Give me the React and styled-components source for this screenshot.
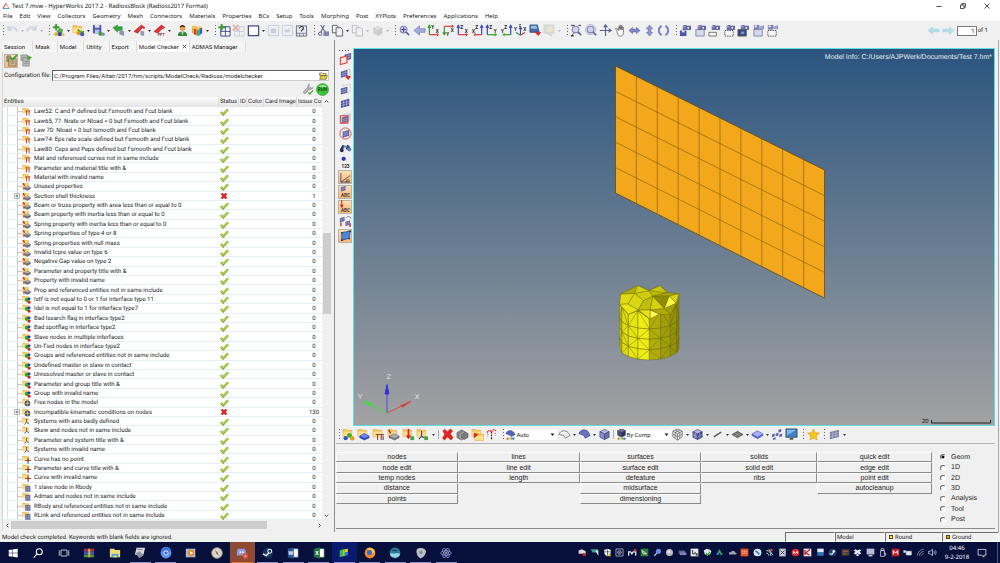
import React from "react";
import styled, { createGlobalStyle, css } from "styled-components";

const UI = 'Roboto, "Liberation Sans", sans-serif';
const SHELL = '"Noto Sans", "Open Sans", sans-serif';
const CLASSIC = '"Liberation Sans", Arial, sans-serif';

const GlobalStyle = createGlobalStyle`
  *, *::before, *::after { box-sizing: border-box; }
  html, body { margin: 0; padding: 0; background: #f0f0f0; }
  body {
    font-family: ${UI};
    font-size: 6px;
    line-height: 9px;
    color: #1c1c1c;
    text-rendering: geometricPrecision;
  }
  button, input, select { font: inherit; color: inherit; margin: 0; padding: 0; border: 0; border-radius: 0; outline: 0; }
  button { background: none; }
`;

/* ---------- icon primitives ---------- */

const Svg = styled.svg`
  display: block;
  flex: none;
  width: ${(p) => p.$size || 13}px;
  height: ${(p) => p.$size || 13}px;
`;

const Folder = ({ x = 0, y = 0 }) => (
  <g transform={`translate(${x} ${y})`}>
    <path d="M1 1.500h4l1 1h4.500v7H1z" fill="#f3c75c" stroke="#d69f3a" strokeWidth=".5" />
    <path d="M1.300 4h9v5.300h-9z" fill="#fbdf8c" />
  </g>
);
const Cube = ({ x = 0, y = 0, s = 1, top = "#a9aee0", left = "#6d73b5", right = "#4a4f90", line = "#2e3266" }) => (
  <g transform={`translate(${x} ${y}) scale(${s})`} stroke={line} strokeWidth=".6" strokeLinejoin="round">
    <path d="M6 .5l5 2.500-5 2.500-5-2.500z" fill={top} />
    <path d="M1 3l5 2.500v6L1 9z" fill={left} />
    <path d="M11 3L6 5.500v6L11 9z" fill={right} />
  </g>
);
const Mesh = ({ x = 0, y = 0, c = "#4d5296" }) => (
  <g transform={`translate(${x} ${y})`}>
    <path d="M0 2l7-2v6.500L0 8.500z" fill={c} />
    <path d="M2.300 1.300v6.500M4.700.7v6.500M0 4.200l7-2M0 6.300l7-2" stroke="#c3c7e8" strokeWidth=".5" />
  </g>
);
const Mag = () => (
  <g>
    <circle cx="6" cy="6" r="3.600" fill="#cfd3ee" stroke="#8387b8" strokeWidth="1.200" />
    <path d="M8.700 8.700L12 12" stroke="#5a5f95" strokeWidth="1.700" />
  </g>
);
const Cam = () => (
  <g>
    <path d="M5 1h3l.5 1H13v4.500H4V2h1z" fill="#6c6fae" />
    <circle cx="10" cy="4.200" r="1.700" fill="#dfe1f5" stroke="#35386e" strokeWidth=".8" />
    <path d="M4 3h3" stroke="#c3c6ea" strokeWidth=".8" />
  </g>
);
const Video = () => (
  <g>
    <path d="M2 1h6v5H2z" fill="#7c80ba" />
    <path d="M8 3l5-2v5L8 5z" fill="#9a9ed0" />
    <circle cx="4" cy="2.500" r="1.500" fill="#c9ccec" />
  </g>
);
const Axes = ({ up, side, hc, vc, flip, down }) => {
  const ox = flip ? 11.5 : 2.5;
  const ex = flip ? 4 : 12;
  const oy = down ? 2.5 : 11.5;
  const ey = down ? 11 : 2;
  const sy = down ? -1 : 1;
  return (
    <g>
      <path d={`M${ox} ${oy}V${ey}M${ox - 1.5} ${ey + 2 * sy}L${ox} ${ey - sy * 0.5}l1.500 ${2.500 * sy}`} stroke={vc} fill="none" strokeWidth="1.300" />
      <path d={`M${ox} ${oy}H${ex}`} stroke={hc} strokeWidth="1.300" />
      <path d={flip ? `M5 ${oy - 1.5}L3 ${oy}l2 1.500` : `M10.500 ${oy - 1.5}l2 1.500-2 1.500`} stroke={hc} fill="none" strokeWidth="1" />
      <text x="4.500" y={down ? 12.5 : 5} fontSize="5" fontWeight="700" fill="#222">{up}</text>
      <text x={flip ? 1 : 9.5} y={down ? 8.5 : 9.5} fontSize="5" fontWeight="700" fill="#222">{side}</text>
    </g>
  );
};
const Rainbow = ({ y = 11 }) => (
  <g>
    <rect x="2" y={y} width="2.500" height="2.500" fill="#e23b3b" />
    <rect x="4.500" y={y} width="2.500" height="2.500" fill="#e9d32b" />
    <rect x="7" y={y} width="2.500" height="2.500" fill="#3bc24a" />
    <rect x="9.500" y={y} width="2.500" height="2.500" fill="#3d50e0" />
  </g>
);
const Pages = () => (
  <g fill="#f2f2f6" stroke="#4a4d5c" strokeWidth=".9">
    <path d="M1.500 1.500h5l1.500 2v6H1.500z" />
    <path d="M5.500 4h5l2 2v7h-7z" />
  </g>
);
const FlatDiamond = ({ c = "#5560d8", t = "#aab2f4" }) => (
  <g>
    <path d="M7 11.500L1 8V6.500l6 1.500 6-1.500V8z" fill={c} stroke="#333a80" strokeWidth=".4" />
    <path d="M7 3l6 3.500L7 10 1 6.500z" fill={t} stroke={c} strokeWidth=".8" />
  </g>
);

const icons = {
  undo: <path d="M2 6c3-4 8-3 10 2M2 6l.5-4M2 6l4 .5" stroke="#b9bfd6" strokeWidth="2" fill="none" opacity=".6" />,
  redo: <path d="M12 6C9 2 4 3 2 8M12 6l-.5-4M12 6l-4 .5" stroke="#b9bfd6" strokeWidth="2" fill="none" opacity=".6" />,
  newModel: (
    <g>
      <path d="M5 8l3-4 4 2-1 4-4 2z" fill="#5aa84c" />
      <path d="M4.500 0v7M1 3.500h7" stroke="#3c9a35" strokeWidth="2" />
      <circle cx="4.500" cy="11" r="2" fill="#e8b21e" />
      <circle cx="8.500" cy="11" r="2.200" fill="#2c46b8" />
      <circle cx="12" cy="11.500" r="1.600" fill="#e8cf3a" />
    </g>
  ),
  openModel: (<g><Folder /><path d="M6 6l4 3 3-1" stroke="#35a02c" strokeWidth="1.600" fill="none" /><circle cx="7" cy="10" r="2.200" fill="#e29a1c" /><circle cx="11" cy="11" r="2.200" fill="#3f55c0" /></g>),
  save: (<g><path d="M1 1h9v9H1z" fill="#4b56ad" /><path d="M3 1h5v3H3z" fill="#dfe3f5" /><path d="M3 6h5v4H3z" fill="#b9c0e8" /><circle cx="9" cy="10.500" r="2.200" fill="#3a9a34" /><circle cx="12" cy="11" r="1.800" fill="#7d88d0" /></g>),
  importG: (<g><path d="M1 4l5-3v2h5v4H6v2z" fill="#35a73a" stroke="#1e7a25" strokeWidth=".5" /><path d="M8 6l5 2v5l-5-2z" fill="#8e93ae" /></g>),
  exportR: (<g><path d="M1 8l8-7 4 3-1 1-2-1-5 6z" fill="#e23232" stroke="#a41c1c" strokeWidth=".5" /><path d="M8 7l4 1v5l-4-1z" fill="#9297b4" /></g>),
  exportP: (<g><path d="M1 8l8-7 4 3-3 1-5 5z" fill="#e23232" stroke="#a41c1c" strokeWidth=".5" /><text x="5" y="13" fontSize="4" fontWeight="700" fill="#8a3030">PPT</text></g>),
  user: (<g><path d="M2 13c0-4 2-5 5-5s5 1 5 5z" fill="#2f8d3a" /><circle cx="7" cy="4.500" r="3" fill="#e0a35c" /><path d="M4 4c0-4 6-4 6 0-2-2-4-1-6 0z" fill="#4d2d14" /><path d="M6 8l1 4 1-4z" fill="#fff" /></g>),
  book: (<g><path d="M1 2h5l1 1h5v4H1z" fill="#f2c45c" /><path d="M3 5l3 1v6l-3-1z" fill="#e23b2a" /><path d="M6 6l3 1v6l-3-1z" fill="#3bb34a" /><path d="M9 5l3-1v6l-3 2z" fill="#3d58d0" /><path d="M1 4l2 1v6l-2-2z" fill="#e9b02b" /></g>),
  pagePlus: (<g><path d="M3 3h10v10H3z" fill="#f4f6fb" stroke="#39408a" strokeWidth="1" /><path d="M8 3v10M3 8h10" stroke="#39408a" strokeWidth=".9" /><path d="M4 0v7M.5 3.500h7" stroke="#36a032" strokeWidth="2" /></g>),
  pageDel: (<g opacity=".35"><path d="M3 3h10v10H3zM8 3v10M3 8h10" fill="none" stroke="#8c8ea0" strokeWidth="1" /><path d="M1 1l6 6M7 1L1 7" stroke="#d63b3b" strokeWidth="2" /></g>),
  win: <path d="M1.500 2h11v10.500h-11z" fill="#fdfdff" stroke="#4a4f80" strokeWidth="1.400" />,
  winA: (<g opacity=".4"><path d="M1.500 1.500h11v11h-11z" fill="#eceef6" stroke="#9298c0" /><path d="M4 5h6v5H4z" fill="#9aa0c4" /></g>),
  winB: (<g opacity=".4"><path d="M1.500 1.500h11v11h-11z" fill="#eceef6" stroke="#9298c0" /><path d="M8 4l2 3-2 3M4 6h4v3H4z" fill="#9aa0c4" /></g>),
  pageEdit: (<g><path d="M1.500 2h11v11h-11z" fill="#e9ebf4" stroke="#555a70" strokeWidth=".9" /><path d="M1.500 10h11M5 10v3M9 10v3" stroke="#555a70" strokeWidth=".7" /><path d="M4.500 5c1-3.500 5-2.500 4.500 0L6.500 8" stroke="#333" strokeWidth="1.200" fill="none" /></g>),
  cut: (<g><path d="M4 1l5 8M8 1L4 9" stroke="#666a80" strokeWidth="1.200" /><circle cx="3.500" cy="10.500" r="1.800" fill="none" stroke="#4a5088" /><path d="M7 8h6v5H7z" fill="#8287b0" /></g>),
  copy: <Pages />,
  paste: <g opacity=".35"><Pages /></g>,
  pasteB: <g opacity=".35"><Cube x={2} y={2} s={0.9} top="#c8c8c8" left="#999" right="#888" line="#777" /></g>,
  zoomFit: (<g><Mag /><path d="M6 3.500v5M3.500 6h5" stroke="#3e437c" strokeWidth="1.100" /></g>),
  back: <path d="M1 7l6-5v3h6v4H7v3z" fill="#a6abdb" stroke="#7479b5" strokeWidth=".7" />,
  ax1: <Axes up="Y" side="X" vc="#27a32d" hc="#d83a3a" />,
  ax2: <Axes up="Y" side="X" vc="#27a32d" hc="#d83a3a" down />,
  ax3: <Axes up="Z" side="X" vc="#3b44d0" hc="#d83a3a" />,
  ax4: <Axes up="Z" side="X" vc="#3b44d0" hc="#d83a3a" flip />,
  ax5: <Axes up="Z" side="Y" vc="#3b44d0" hc="#27a32d" />,
  ax6: <Axes up="Z" side="Y" vc="#3b44d0" hc="#27a32d" flip />,
  iso: (<g><path d="M7 12V4M5.500 5.500L7 3.500l1.500 2" stroke="#3b44d0" fill="none" strokeWidth="1.200" /><path d="M7 12L2 9" stroke="#27a32d" strokeWidth="1.300" /><path d="M7 12l5-3" stroke="#d83a3a" strokeWidth="1.300" /><text x="0" y="7" fontSize="5" fontWeight="700" fill="#222">Y</text><text x="10" y="7" fontSize="5" fontWeight="700" fill="#222">X</text><text x="5" y="3.500" fontSize="4" fontWeight="700" fill="#222">Z</text></g>),
  scene: (<g><path d="M1 1h8l2 8H1z" fill="#3f6ea8" stroke="#27486f" strokeWidth=".8" /><path d="M2 2h6l1 3H2z" fill="#9cc0e4" /><path d="M6 9l3-1 4 1-3 4z" fill="#e02a2a" /></g>),
  sceneB: (<g opacity=".45"><path d="M1 1h11v9H1z" fill="#b9cbb9" stroke="#aaa" strokeWidth=".8" /><circle cx="7" cy="6" r="3" fill="#efd9a0" /><path d="M4 9l6 4" stroke="#bfa0a0" strokeWidth="1.500" /></g>),
  zoomWin: (<g><Mag /><path d="M1 1.500h4M9 1.500h3M1 12.500h3" stroke="#333" strokeWidth="1" /><path d="M4 10L1 13h3" stroke="#333" fill="none" strokeWidth=".8" /></g>),
  zoomCirc: (<g><Mag /><circle cx="6" cy="6" r="5.300" fill="none" stroke="#9a9cc0" strokeWidth=".8" /></g>),
  pan: (<g stroke="#5a5f95" strokeWidth="1.200" fill="#5a5f95"><path d="M7 1v12M1 7h12" /><path d="M5.500 3L7 1l1.500 2zM11 5.500l2 1.500-2 1.500z" /></g>),
  hand: <path d="M3 7l-1.500-2 1-.7L5 7V3h1.200v3V1.500h1.300V6V2h1.300v4.500V3.500h1.300V9c0 3-1 4-3.500 4S4 11 3 7z" fill="#fff" stroke="#444" strokeWidth=".7" />,
  lr: <path d="M1 7l4-3.500v2h4v-2L13 7l-4 3.500v-2H5v2z" fill="#8085c6" stroke="#5a5fa0" strokeWidth=".5" />,
  ud: <path d="M7 1l3.500 4h-2v4h2L7 13 3.500 9h2V5h-2z" fill="#8f94d2" stroke="#5a5fa0" strokeWidth=".5" />,
  rot: (<g fill="none" stroke="#7d82c4" strokeWidth="2.200"><path d="M5 2C1 4 1 10 5 12" /><path d="M9 2c4 2 4 8 0 10" /></g>),
  cam1: (<g><Cam /><path d="M1 7h7v6H1z" fill="#4e54a6" /><path d="M3 7h3v2H3z" fill="#dfe1f5" /></g>),
  cam2: (<g><Cam /><path d="M2 6h9v7H2z" fill="#d4dbef" stroke="#5c6080" strokeWidth=".7" /></g>),
  cam3: (<g><Cam /><path d="M1 9h8v4H1z" fill="#f4f4f8" stroke="#555" strokeWidth=".8" /></g>),
  cam4: (<g><Cam /><path d="M2 7h9v6H2z" fill="#f7f7fb" stroke="#333" strokeWidth=".9" strokeDasharray="1.500 1" /></g>),
  cam5: (<g><Cam /><path d="M1 6h9v7H1z" fill="#2f3c78" stroke="#666" /><path d="M4 8h4v3H4z" fill="#6b9ad8" /></g>),
  vid1: (<g><Video /><path d="M2 6h9v7H2z" fill="#d4dbef" stroke="#5c6080" strokeWidth=".7" /></g>),
  vid2: (<g><Video /><path d="M2 7h9v6H2z" fill="#f7f7fb" stroke="#333" strokeWidth=".9" strokeDasharray="1.500 1" /></g>),
  prev: <path d="M1 7l5-4v2.500h7v3H6V11z" fill="#b5dfe8" stroke="#a0d2dd" strokeWidth=".5" />,
  next: <path d="M13 7L8 3v2.500H1v3h7V11z" fill="#b5dfe8" stroke="#a0d2dd" strokeWidth=".5" />,

  check1: (<g><path d="M2 2h4v6H2z" fill="#a8997c" stroke="#6b6250" strokeWidth=".7" /><path d="M4 5h8v8H4z" fill="#c9b48c" stroke="#6b6250" strokeWidth=".7" /><path d="M6 8h4M6 10h4" stroke="#8a8168" strokeWidth=".8" /><path d="M6 4l2 2 5-5" stroke="#35a02c" strokeWidth="1.800" fill="none" /></g>),
  check2: (<g><path d="M1 1h7v6H1z" fill="#b5b5b5" stroke="#7d7d7d" strokeWidth=".6" /><path d="M3 4h7v9H3z" fill="#b8b8b8" stroke="#6f6f6f" strokeWidth=".6" /><path d="M5 8h4M5 10h4" stroke="#888" strokeWidth=".8" /><path d="M8 1l5 3-5 3z" fill="#4aa53e" /></g>),
  openFile: (<g><path d="M1 3h4l1 1h5v3H1z" fill="#f5e67a" stroke="#333" strokeWidth=".8" /><path d="M1 13l2-6h10l-2 6z" fill="#e8c92c" stroke="#333" strokeWidth=".8" /></g>),
  wrench: (<g><path d="M3 11l6-6" stroke="#777" strokeWidth="3.200" /><path d="M3 11l6-6" stroke="#c4c4c4" strokeWidth="2" /><path d="M9 1a3 3 0 1 0 4 4l-2 .5L8.500 3z" fill="#c4c4c4" stroke="#777" strokeWidth=".6" /><path d="M8 10l1.500 2L13 8" stroke="#35a02c" strokeWidth="1.300" fill="none" /></g>),
  run: (<g><circle cx="7" cy="7" r="6.500" fill="#3fc23a" stroke="#2a8f2a" strokeWidth=".6" /><path d="M2 5c2-4 8-4 10 0z" fill="#8fe88a" /><text x="7" y="9" fontSize="5" fontWeight="700" textAnchor="middle" fill="#0d4d12">RUN</text></g>),

  s1: (<g><Mesh x={6} y={0} /><path d="M1.500 5l7-1.500v7l-7 2z" fill="#fbe9e9" stroke="#e0483c" strokeWidth="1.200" /></g>),
  s2: (<g><Mesh x={2} y={2} /><path d="M9 1l3 1v6" stroke="#bbb" fill="none" /><path d="M7 10l2-2 4 1-3 4z" fill="#e02a2a" /></g>),
  s3: (<g><Mesh x={2} y={4} /><path d="M3 3l9-2v9l-3 1" fill="none" stroke="#b5b5b5" strokeWidth=".8" strokeDasharray="1 .6" /></g>),
  s4: (<g transform="translate(2 2) scale(1.300 1.150)"><Mesh /></g>),
  s5: (<g><path d="M4 2l9-1v8l-9 2z" fill="#d5d5dc" /><Mesh x={3} y={4} /><path d="M1.500 4h8v8h-8z" fill="none" stroke="#e0483c" strokeWidth="1.200" /></g>),
  s6: (<g><Mesh x={4} y={3} /><circle cx="7" cy="7" r="6" fill="none" stroke="#e0483c" strokeWidth="1" /></g>),
  s7: (<g><path d="M1 9l3-5 2 1-2 5zM7 9l2-5 2 1 2 5z" fill="#26386e" /><circle cx="3" cy="10" r="2" fill="#1c2b58" /><circle cx="11" cy="9" r="2.200" fill="#5b80c0" /><path d="M5 5h4v2H5z" fill="#6b7cae" /></g>),
  s8: (<g><circle cx="5" cy="3" r="2.300" fill="#2a33c0" /><text x="7" y="13" fontSize="5" fontWeight="700" textAnchor="middle" fill="#222">123</text></g>),
  s9: (<g><path d="M2 2v10h10M2 12l10-7" stroke="#2b2f78" fill="none" strokeWidth=".8" /><text x="6" y="12" fontSize="4" fill="#222">.40</text></g>),
  s10: (<g><g transform="translate(2 1) scale(.7)"><Mesh /></g><text x="7" y="12.500" fontSize="5" fontWeight="700" textAnchor="middle" fill="#444">ABC</text></g>),
  s11: (<g><path d="M3 0v7M1.500 5L3 8l1.500-3" stroke="#d02020" fill="#d02020" strokeWidth="1" /><text x="7" y="12.500" fontSize="5" fontWeight="700" textAnchor="middle" fill="#444">ABC</text></g>),
  s12: (<g><g transform="translate(1 2) scale(.7)"><Mesh /></g><g transform="translate(7 6) scale(.7)"><Mesh /></g><path d="M2 8v4M12 9v4" stroke="#e02a2a" strokeWidth="1.500" /><path d="M8 3c2-3 4-1 5 1" stroke="#777" fill="none" /></g>),
  s13: (<g><path d="M3 4l9-2-1 8-8 2z" fill="#4c86d8" stroke="#1f4688" strokeWidth=".8" /><circle cx="3" cy="4" r=".9" fill="#222" /><circle cx="12" cy="2.500" r=".9" fill="#222" /><circle cx="3" cy="12" r=".9" fill="#222" /><circle cx="11" cy="10.500" r=".9" fill="#222" /></g>),

  comp: (<g><Folder /><circle cx="8" cy="8" r="2.600" fill="#3bb02f" /><circle cx="4" cy="11" r="2.300" fill="#3554c8" /><circle cx="11" cy="11" r="2.500" fill="#d9a520" /></g>),
  part: (<g><Folder /><path d="M8 6l5 2.500v2L8 13l-5-2.500v-2z" fill="#2c46c8" stroke="#16268a" strokeWidth=".5" /><path d="M8 6l5 2.500L8 11 3 8.500z" fill="#6c84ee" /></g>),
  mat: (<g><Folder /><path d="M4 7h9M6 7v6M10 7v6M12 8v5" stroke="#8e4a4a" strokeWidth="1.200" /></g>),
  prop: (<g><Folder /><path d="M2 2l2 4M3 8v3" stroke="#d02a1c" strokeWidth="1.600" /><path d="M8 6l5 2.500v2L8 13l-5-2.500v-2z" fill="#77777c" stroke="#4a4a4e" strokeWidth=".5" /><path d="M8 6l5 2.500L8 11 3 8.500z" fill="#a9a9ae" /></g>),
  load: (<g><Folder /><path d="M7 1v8" stroke="#e02020" strokeWidth="2" /><path d="M4 8h6l-3 4z" fill="#e02020" /><path d="M9 9h4v4H9z" fill="#4aa53e" /></g>),
  sys: (<g><Folder /><path d="M6 3v6l-3 3M6 9l4 2" stroke="#44506e" strokeWidth="1.300" fill="none" /><path d="M9 9h4v4H9z" fill="#4aa53e" /></g>),
  del: <path d="M2 3l2-1.500L7 4l3-3 2.500 2L10 6.500l3 4L10.500 13 7 9.500 4 13l-2.500-2L4 7z" fill="#e8221c" stroke="#9c1410" strokeWidth=".5" />,
  cards: (<g fill="#8b8b8b" stroke="#444" strokeWidth=".5"><path d="M1 5l5-3 3 2v5l-5 3-3-2z" /><path d="M3 6l5-3 3 2v5l-5 3-3-2z" fill="#a5a5a5" /><path d="M6 7l4-2.500 3 1.500v4l-4 2.500-3-2z" fill="#7a7a7a" /></g>),
  organize: (<g><Folder /><g transform="translate(3 4)"><Folder /></g><path d="M3 5l5 2-5 4z" fill="#e02020" /></g>),
  renumber: (<g><path d="M7 4v9" stroke="#333" strokeWidth="1.300" strokeDasharray="2 1" /><path d="M2.500 5c0-3 4-3 4 0M7.500 4c0-3 4-3 4 0" stroke="#d83030" fill="none" strokeWidth="1.400" strokeDasharray="1.500 .7" /><path d="M3 6v3M11 5v3" stroke="#d86060" strokeWidth="1.200" strokeDasharray="1.500 1" /></g>),
  shade: (<g><path d="M1 6c2-5 7-5 10-2l2 3-5 3-2-2z" fill="#5a62b8" stroke="#333a80" strokeWidth=".6" /><Rainbow /></g>),
  wireSurf: <path d="M1 7c2-5 7-5 10-2l2 3-5 3-2-3z" fill="#eee" stroke="#666" strokeWidth=".8" />,
  solidSurf: <path d="M1 6c2-5 7-5 10-2l2 4-5 3-2-3z" fill="#6a72c0" stroke="#3b4080" strokeWidth=".7" />,
  cube: <Cube x={1} y={1} top="#b7bbe6" left="#8a8fce" right="#6a6fb0" />,
  cubeColor: (<g><Cube x={1} y={-1} top="#70758c" left="#474b74" right="#2f3258" /><Rainbow /></g>),
  cubeWire: (<g fill="none" stroke="#555" strokeWidth=".7"><path d="M7 1l5 2.500v6L7 13 2 9.500v-6z" /><path d="M2 3.500l5 2.500 5-2.500M7 6v7M2 6.500l5 3 5-3M4.500 2.200l5 2.600v6M9.500 2.200l-5 2.600v6" /></g>),
  cubeMesh: (<g><Cube x={1} y={1} /><path d="M2 7l5 3 5-3M4.500 3l5 2.500v5.500M9.500 3L4.500 5.500V11" stroke="#c3c7e8" fill="none" strokeWidth=".5" /></g>),
  line: <path d="M3 9.500l8-5" stroke="#555" strokeWidth="1.500" />,
  flat: (<g><path d="M7 3.500l6 3.500-6 3.500L1 7z" fill="#6d706c" stroke="#3f423e" strokeWidth=".6" /><path d="M4 5.300l6 3.500M10 5.300L4 8.800" stroke="#a9aca8" strokeWidth=".6" /></g>),
  diamond: <FlatDiamond />,
  split: (<g fill="#5d64b4"><path d="M1 7l3-1v3l-3 1zM5 6l3-1v3L5 9zM8 2l3-1v3l-3 1zM2 11l3-1v2l-3 1zM9 7l3-1v3l-3 1z" /></g>),
  monitor: (<g><path d="M1 1h12v9H1z" fill="#3d86c8" stroke="#2b3540" strokeWidth=".8" /><path d="M2 2h10L2 8z" fill="#7fb9ea" /><path d="M5 11h4v1.500H5z" fill="#333" /></g>),
  star: <path d="M7 1l1.900 4 4.400.5-3.300 3 .9 4.400L7 10.700l-3.900 2.200.9-4.400-3.300-3L5.100 5z" fill="#f8c41a" stroke="#d19408" strokeWidth=".6" />,
  meshSurf: (<g transform="translate(2 2) scale(1.400 1.200)"><Mesh c="#7a7f9c" /></g>),
};

const Icon = ({ name, size }) => (
  <Svg $size={size} viewBox="0 0 14 14" aria-hidden="true">{icons[name]}</Svg>
);

/* ---------- tree item icons ---------- */
const treeIcons = {
  mat: (<g><Folder /><path d="M5 6h8M7 6v7M11 6v7" stroke="#c0403a" strokeWidth="1.500" /></g>),
  prop: (<g><Folder /><path d="M2 2l2 4M3 8v4" stroke="#c02a1c" strokeWidth="2" /><path d="M8 5.500l5.500 2.500v3L8 13.500 3.500 11V8z" fill="#6c6c70" /><path d="M8 6l4.500 2L8 10 4 8z" fill="#aeaeb4" /></g>),
  group: (<g><Folder /><circle cx="7.500" cy="7.500" r="3.200" fill="#1fae28" /><circle cx="11" cy="6" r="2.300" fill="#2434c8" /><circle cx="11" cy="11" r="2.500" fill="#d82020" /></g>),
  node: (<g><Folder /><circle cx="8.500" cy="8.500" r="4.500" fill="#4a5078" /><path d="M4 8.500h9M8.500 4v9" stroke="#b9bcd0" strokeWidth=".9" /><circle cx="8.500" cy="8.500" r="1.700" fill="#e8c820" /></g>),
  system: (<g><Folder /><path d="M7 3v5l-3 4M7 8l4 3" stroke="#4a5890" strokeWidth="1.400" fill="none" /></g>),
  curve: (<g><Folder /><path d="M5 8.500h9" stroke="#d02020" strokeWidth="1.500" /><path d="M9.500 4v9.500" stroke="#333" strokeWidth="1.500" /></g>),
  rigid: (<g><Folder /><path d="M5 4.500h8v9H5z" fill="#59608e" /><path d="M5 7.500h8M5 10.500h8M7.500 4.500v9M10.500 4.500v9" stroke="#a5aace" strokeWidth=".8" /></g>),
};

/* ---------- shell: window chrome ---------- */

const Page = styled.div`
  display: flex;
  flex-direction: column;
  min-height: 100vh;
  background: #f0f0f0;
`;
const TitleBar = styled.header`
  display: flex;
  align-items: center;
  height: 12px;
  padding-left: 2px;
  gap: 2px;
  background: #fff;
  font-family: ${SHELL};
  color: #111;
`;
const WindowTitle = styled.h1`
  margin: 0;
  flex: 1;
  font-size: 6px;
  font-weight: 400;
  white-space: nowrap;
`;
const WindowButtons = styled.div`
  display: flex;
  padding-right: 1px;
`;
const WindowButton = styled.button`
  width: 24px;
  height: 11px;
  display: grid;
  place-items: center;
`;
const MenuBar = styled.nav`
  display: flex;
  align-items: center;
  gap: 7px;
  height: 9px;
  padding-left: 3px;
  background: #fff;
  font-family: ${SHELL};
`;
const MenuItem = styled.button`
  line-height: 9px;
  white-space: nowrap;
`;

/* ---------- toolbars ---------- */

const ToolStrip = styled.div`
  display: flex;
  align-items: center;
  gap: ${(p) => p.$gap}px;
  height: ${(p) => p.$height}px;
  padding-left: ${(p) => p.$inset}px;
  flex: none;
`;
const ToolGroup = styled.div`
  display: flex;
  align-items: center;
  justify-content: space-between;
  width: ${(p) => p.$width}px;
`;
const Grip = styled.span`
  flex: none;
  width: ${(p) => (p.$flat ? 12 : 3)}px;
  height: ${(p) => (p.$flat ? 3 : 12)}px;
  background: ${(p) =>
    p.$flat
      ? "repeating-linear-gradient(90deg, #666 0 1px, transparent 1px 3px) center / 100% 1px no-repeat"
      : "repeating-linear-gradient(#666 0 1px, transparent 1px 3px) center / 1px 100% no-repeat"};
`;
const Divider = styled.span`
  width: 3px;
  height: 9px;
  background: ${(p) => (p.$blank ? "none" : "linear-gradient(#b0b0b0, #b0b0b0) center / 1px 100% no-repeat")};
`;
const ToolButton = styled.button`
  flex: none;
  width: 14px;
  height: 14px;
  display: grid;
  place-items: center;
  ${(p) =>
    p.$on &&
    css`
      background: linear-gradient(#fbe3b6, #fbb36a);
      box-shadow: inset 0 0 0 1px #b9b4ac;
    `}
`;
const CaretButton = styled.button`
  flex: none;
  width: 5px;
  height: 12px;
  display: grid;
  place-items: center;
`;
const Caret = ({ faded }) => (
  <CaretButton aria-label="More">
    <svg width="3" height="2" viewBox="0 0 3 2"><path d="M0 0h3L1.500 2z" fill={faded ? "#b5b5b5" : "#333"} /></svg>
  </CaretButton>
);

const PagerBox = styled.div`
  margin-left: auto;
  display: flex;
  align-items: center;
  gap: 1px;
  padding-right: 12px;
`;
const PagerInput = styled.input`
  width: 20px;
  height: 10px;
  padding-right: 1px;
  background: #fff;
  border: 1px solid #7a7a7a;
  text-align: right;
`;

const renderTools = (items) =>
  items.map((it, i) => {
    if (it === "|") return <Divider key={i} />;
    if (it === " ") return <Divider key={i} $blank />;
    if (it === "v") return <Caret key={i} />;
    if (it === "f") return <Caret key={i} faded />;
    if (React.isValidElement(it)) return React.cloneElement(it, { key: i });
    return <ToolButton key={i} aria-label={it}><Icon name={it} /></ToolButton>;
  });

const Tools = ({ width, items }) => (
  <ToolGroup $width={width}>
    <Grip />
    {renderTools(items)}
  </ToolGroup>
);

const ComboBox = styled.label`
  display: flex;
  align-items: center;
  width: ${(p) => p.$width}px;
  height: 11px;
  background: #fff;
`;
const ComboSelect = styled.select`
  appearance: none;
  flex: 1;
  min-width: 0;
  height: 11px;
  background: transparent;
`;
const Combo = ({ width, icon, label, value }) => (
  <ComboBox $width={width}>
    <Icon name={icon} size={11} />
    <ComboSelect aria-label={label} defaultValue={value}><option>{value}</option></ComboSelect>
    <svg width="9" height="9" viewBox="0 0 9 9"><path d="M2.500 3.500h4L4.500 6z" fill="#222" /></svg>
  </ComboBox>
);

/* ---------- main split ---------- */

const Main = styled.main`
  flex: 1;
  display: flex;
  min-height: 0;
`;
const SidePanel = styled.section`
  flex: none;
  width: 335px;
  display: flex;
  flex-direction: column;
  padding: 1px 3px 2px 2px;
  border-right: 1px solid #8d8d8d;
`;
const TabList = styled.div`
  display: flex;
  height: 11px;
`;
const Tab = styled.button`
  display: flex;
  align-items: center;
  gap: 3px;
  padding: 0 ${(p) => (p.$active ? 2 : 7)}px 0 2px;
  border-right: 1px solid #dcdcdc;
  background: ${(p) => (p.$active ? "#fff" : "#f4f4f4")};
  white-space: nowrap;
`;
const PanelBody = styled.div`
  flex: 1;
  display: flex;
  flex-direction: column;
  border-left: 1px solid #d5d5d5;
`;
const PanelTools = styled.div`
  display: flex;
  align-items: center;
  gap: 1px;
  height: 17px;
  padding-left: 1px;
`;
const PathRow = styled.div`
  display: flex;
  align-items: center;
  height: 12px;
  padding: 0 2px 0 1px;
`;
const PathLabel = styled.label`
  width: 48px;
  white-space: nowrap;
`;
const PathField = styled.div`
  flex: 1;
  display: flex;
  align-items: center;
  height: 11px;
  background: #fff;
  border: 1px solid #8a8a8a;
  border-color: #5f5f5f #ccc #ccc #5f5f5f;
`;
const PathInput = styled.input`
  flex: 1;
  height: 9px;
  padding-left: 1px;
  background: transparent;
`;
const ActionRow = styled.div`
  display: flex;
  justify-content: flex-end;
  align-items: center;
  gap: 1px;
  height: 16px;
  padding-right: 2px;
`;
const Browser = styled.div`
  flex: 1;
  display: flex;
  background: #fff;
`;
const Tree = styled.table`
  flex: 1;
  display: flex;
  flex-direction: column;
  border-spacing: 0;
`;
const TreeHead = styled.thead`
  display: block;
  background: linear-gradient(#fdfdfd, #e4e4e4);
`;
const TreeBody = styled.tbody`
  flex: 1;
  display: flex;
  flex-direction: column;
  background: linear-gradient(#dcdcdc, #dcdcdc) 4px 0 / 1px 100% no-repeat,
    linear-gradient(#c9c9c9, #c9c9c9) 14px 0 / 1px 100% no-repeat;
`;
const TreeRow = styled.tr`
  flex: 1;
  display: grid;
  grid-template-columns: 1fr 20px 8px 17px 33px 25px;
  align-items: center;
  box-shadow: ${(p) => (p.$head ? "none" : "inset 0 -1px #e6f1f6")};
`;
const HeadCell = styled.th`
  padding: 0 0 0 1px;
  font-weight: 400;
  line-height: 10px;
  text-align: left;
  white-space: nowrap;
  box-shadow: inset -1px 0 #d8d8d8;
`;
const NameCell = styled.td`
  display: flex;
  align-items: center;
  padding: 0 0 0 11px;
  line-height: 9px;
  white-space: nowrap;
`;
const Stub = styled.span`
  width: 8px;
  height: 1px;
  background: linear-gradient(90deg, transparent 0 3px, #c9c9c9 3px);
`;
const Expander = styled.button`
  width: 8px;
  height: 6px;
  display: grid;
  place-items: center start;
`;
const ItemName = styled.span`
  padding-left: 3px;
`;
const StatusCell = styled.td`
  padding: 0 0 0 1px;
`;
const CountCell = styled.td`
  grid-column: 6;
  padding: 0 0 0 9px;
  line-height: 9px;
  text-align: center;
`;
const VScroll = styled.div`
  flex: none;
  width: 9px;
  display: flex;
  flex-direction: column;
  align-items: center;
  background: #f0f0f0;
`;
const HScroll = styled.div`
  flex: none;
  height: 10px;
  display: flex;
  align-items: center;
  padding-right: 8px;
  background: #f0f0f0;
`;
const ScrollButton = styled.button`
  width: 8px;
  height: 9px;
  display: grid;
  place-items: center;
`;
const Space = styled.span`
  flex: ${(p) => p.$grow};
`;
const Thumb = styled.span`
  flex: ${(p) => p.$grow};
  background: #cdcdcd;
  ${(p) => (p.$row ? "height: 8px;" : "width: 8px;")}
`;
const Arrow = ({ turn = 0 }) => (
  <svg width="5" height="5" viewBox="0 0 5 5">
    <path d="M.8 3.300L2.500 1.500l1.700 1.800" fill="none" stroke="#444" strokeWidth=".9" transform={`rotate(${turn} 2.500 2.500)`} />
  </svg>
);

const rows = [
  ["mat", "Law52: C and P defined but Fsmooth and Fcut blank"],
  ["mat", "Law65, 77: Nrate or Nload > 0 but Fsmooth and Fcut blank"],
  ["mat", "Law 70: Nload > 0 but Ismooth and Fcut blank"],
  ["mat", "Law74: Eps rate scale defined but Fsmooth and Fcut blank"],
  ["mat", "Law80: Ceps and Peps defined but Fsmooth and Fcut blank"],
  ["mat", "Mat and referenced curves not in same include"],
  ["mat", "Parameter and material title with &"],
  ["mat", "Material with invalid name"],
  ["prop", "Unused properties"],
  ["prop", "Section shell thickness", 1],
  ["prop", "Beam or truss property with area less than or equal to 0"],
  ["prop", "Beam property with inertia less than or equal to 0"],
  ["prop", "Spring property with inertia less than or equal to 0"],
  ["prop", "Spring properties of type 4 or 8"],
  ["prop", "Spring properties with null mass"],
  ["prop", "Invalid Icpre value on type 6"],
  ["prop", "Negative Gap value on type 2"],
  ["prop", "Parameter and property title with &"],
  ["prop", "Property with invalid name"],
  ["prop", "Prop and referenced entities not in same include"],
  ["group", "Istf is not equal to 0 or 1 for interface type 11"],
  ["group", "Idel is not equal to 1 for interface type7"],
  ["group", "Bad Isearch flag in interface type2"],
  ["group", "Bad spotflag in interface type2"],
  ["group", "Slave nodes in multiple interfaces"],
  ["group", "Un-Tied nodes in interface type2"],
  ["group", "Groups and referenced entities not in same include"],
  ["group", "Undefined master or slave in contact"],
  ["group", "Unresolved master or slave in contact"],
  ["group", "Parameter and group title with &"],
  ["group", "Group with invalid name"],
  ["node", "Free nodes in the model"],
  ["node", "Incompatible kinematic conditions on nodes", 130],
  ["system", "Systems with axis badly defined"],
  ["system", "Skew and nodes not in same include"],
  ["system", "Parameter and system title with &"],
  ["system", "Systems with invalid name"],
  ["curve", "Curve has no point"],
  ["curve", "Parameter and curve title with &"],
  ["curve", "Curve with invalid name"],
  ["rigid", "1 slave node in Rbody"],
  ["rigid", "Admas and nodes not in same include"],
  ["rigid", "RBody and referenced entities not in same include"],
  ["rigid", "RLink and referenced entities not in same include"],
];

const Passed = () => (
  <Svg $size={9} viewBox="0 0 8 8" role="img" aria-label="Passed">
    <path d="M.8 4.500l2 2L7.200 2" fill="none" stroke="#6f9a1e" strokeWidth="2" />
    <path d="M1 4.500l1.900 1.600L7 2" fill="none" stroke="#b4dc52" strokeWidth="1.200" />
  </Svg>
);
const Failed = () => (
  <Svg $size={8} viewBox="0 0 8 8" role="img" aria-label="Failed">
    <path d="M1.500 1.500l5 5M6.500 1.500l-5 5" stroke="#e0201c" strokeWidth="2.400" />
  </Svg>
);

const EntityTree = () => (
  <Tree>
    <TreeHead>
      <TreeRow $head>
        {["Entities", "Status", "ID", "Color", "Card Image", "Issue Co"].map((h) => <HeadCell key={h}>{h}</HeadCell>)}
      </TreeRow>
    </TreeHead>
    <TreeBody>
      {rows.map(([kind, name, count]) => (
        <TreeRow key={name}>
          <NameCell>
            {count ? (
              <Expander aria-label={`Expand ${name}`}>
                <svg width="6" height="6" viewBox="0 0 6 6"><path d="M.5.5h5v5h-5z" fill="#fff" stroke="#9aa3b5" strokeWidth=".8" /><path d="M1.500 3h3M3 1.500v3" stroke="#445" strokeWidth=".7" /></svg>
              </Expander>
            ) : (
              <Stub />
            )}
            <Svg $size={9} viewBox="0 0 14 14" aria-hidden="true">{treeIcons[kind]}</Svg>
            <ItemName>{name}</ItemName>
          </NameCell>
          <StatusCell>{count ? <Failed /> : <Passed />}</StatusCell>
          <CountCell>{count || 0}</CountCell>
        </TreeRow>
      ))}
    </TreeBody>
  </Tree>
);

/* ---------- graphics area ---------- */

const WorkArea = styled.section`
  flex: 1;
  min-width: 0;
  display: flex;
  flex-direction: column;
  padding: 0 3px 3px 1px;
  margin-right: 1px;
  border-right: 1px solid #a8a8a8;
`;
const ViewRow = styled.div`
  flex: 1;
  display: flex;
  padding-top: 8px;
`;
const SideTools = styled.div`
  flex: none;
  display: flex;
  flex-direction: column;
  align-items: center;
  justify-content: space-between;
  width: 17px;
  height: 195px;
  padding: 1px 1px 0 2px;
`;
const Viewport = styled.div`
  position: relative;
  flex: 1;
  min-width: 0;
  display: flex;
  border: 1px solid #5ce0e2;
  background: linear-gradient(#2b557f, #a2a2a2);
`;
const ModelInfo = styled.p`
  position: absolute;
  top: 4px;
  right: 2px;
  margin: 0;
  font-family: ${CLASSIC};
  font-size: 7px;
  color: #e8edf2;
`;
const SceneSvg = styled.svg`
  flex: 1;
  width: 100%;
  font-family: ${CLASSIC};
`;

const Plate = () => {
  const x0 = 261.5, x1 = 470.5, yl = 17, yr = 121, hl = 127, hr = 128;
  const cols = Array.from({ length: 9 }, (_, i) => (i + 1) / 10);
  const lines = Array.from({ length: 4 }, (_, i) => (i + 1) / 5);
  return (
    <g stroke="#8a6214" strokeWidth=".7">
      <path d={`M${x0} ${yl}L${x1} ${yr}V${yr + hr}L${x0} ${yl + hl}z`} fill="#f3a81c" stroke="#5b430f" />
      {cols.map((t) => {
        const x = x0 + (x1 - x0) * t, y = yl + (yr - yl) * t;
        return <path key={t} d={`M${x} ${y}V${y + hl}`} />;
      })}
      {lines.map((t) => <path key={t} d={`M${x0} ${yl + hl * t}L${x1} ${yr + hr * t}`} />)}
    </g>
  );
};

const Cylinder = () => {
  const crown = [103, 112, 133, 122, 147, 124, 134, 100, 72];
  const shades = ["#cfcc0e", "#dedb10", "#e8e512", "#f0ed16", "#b0ad0b", "#a09d0a", "#949108", "#868408"];
  const pt = (i, k) => {
    const a = ((i - 4) * Math.PI) / 8;
    const x = 148 + 89 * Math.sin(a);
    if (k === 0) return [x, crown[i]];
    const low = 235 + 35 * Math.cos(a);
    return [x, low - (4 - k) * 31];
  };
  const cells = [];
  for (let i = 0; i < 8; i += 1) {
    for (let k = 0; k < 4; k += 1) {
      const a = pt(i, k), b = pt(i + 1, k), c = pt(i + 1, k + 1), d = pt(i, k + 1);
      const diag = (i + k) % 2 ? [a, c] : [b, d];
      cells.push(
        <g key={`${i}-${k}`}>
          <path d={`M${a}L${b}L${c}L${d}z`} fill={shades[i]} />
          <path d={`M${diag[0]}L${diag[1]}`} />
        </g>
      );
    }
  }
  return (
    <g transform="translate(246 221) scale(.3333)" stroke="#6b690a" strokeWidth="1.300" strokeLinejoin="round">
      {cells}
      <path d="M62 72l51-25 34 15 33-15 22 21 35 3-8 29-17 34-33-12-30 25-33-26-32 12-26-30z" fill="#c4c10c" />
      <path d="M62 72l42-2-20 32-25 1z" fill="#dedb12" />
      <path d="M59 103l25-1 31 18-30 13z" fill="#e8e514" />
      <path d="M62 72l51-25-9 23z" fill="#b0ad0a" />
      <path d="M104 70l43-8 11 17-28 13z" fill="#cfcc0e" />
      <path d="M113 47l34 15-43 8z" fill="#d6d310" />
      <path d="M147 62l33-15 22 21-44 11z" fill="#b9b60c" />
      <path d="M180 47l22 21-55-6z" fill="#c9c60e" />
      <path d="M202 68l35 3-29 7-50 1z" fill="#a8a50a" />
      <path d="M158 79l50-1-15 38z" fill="#8f8c08" />
      <path d="M208 78l-15 38 36-16z" fill="#f8f545" />
      <path d="M208 78l29-7-8 29z" fill="#d6d318" />
      <path d="M193 116l36-16-17 34z" fill="#a09d0a" />
      <path d="M158 79l35 37-43 4z" fill="#d4d110" />
      <path d="M84 102l20-32 26 22-15 28z" fill="#dad712" />
      <path d="M130 92l28-13-8 41-35 0z" fill="#c0bd0c" />
      <path d="M150 120l29 12-29 14z" fill="#ffff55" />
      <path d="M115 120l35 0v27z" fill="#e4e114" />
      <path d="M150 120l43-4 19 18-33-2z" fill="#b0ad0b" />
    </g>
  );
};

const Triad = () => (
  <g strokeWidth="1" fill="none">
    <path d="M33 364V335" stroke="#4b4bd8" />
    <path d="M31 345l2-9 2 9z" fill="#3434d8" stroke="#3434d8" />
    <path d="M33 364L10 353" stroke="#3fdc3f" />
    <path d="M9 352l10 3-2 2z" fill="#3fdc3f" stroke="#3fdc3f" />
    <path d="M33 364l23-11" stroke="#e04848" />
    <path d="M57 352l-8 6-3-1z" fill="#a05050" stroke="#e04848" />
    <g fill="#e4e6ea" fontSize="7" textAnchor="middle">
      <text x="35" y="330">Z</text>
      <text x="6" y="350">Y</text>
      <text x="63" y="350">X</text>
    </g>
  </g>
);

const Scene = () => (
  <SceneSvg viewBox="0 0 640 376" preserveAspectRatio="xMidYMid meet" role="img" aria-label="Model view">
    <Plate />
    <Cylinder />
    <Triad />
    <g stroke="#222" fill="none" strokeWidth="1"><path d="M577.500 371v3h59v-3" /></g>
    <text x="568" y="374" fontSize="6" fill="#222">20</text>
  </SceneSvg>
);

/* ---------- command panel ---------- */

const CommandPanel = styled.div`
  display: flex;
  height: 86px;
  padding-top: 8px;
  border-top: 1px solid #b5b5b5;
  border-bottom: 1px solid #8a8a8a;
  font-family: ${CLASSIC};
  font-size: 7px;
`;
const CommandGrid = styled.div`
  flex: 1;
  display: grid;
  grid-template-columns: 122fr 122fr 122fr 116fr 115fr;
  align-items: start;
`;
const CommandColumn = styled.div`
  display: grid;
  grid-template-rows: repeat(5, 1fr);
  height: 52px;
`;
const Command = styled.button`
  grid-row: ${(p) => p.$row};
  line-height: 8px;
  background: #f0f0f0;
  border: 1px solid;
  border-color: #fff #8a8a8a #8a8a8a #fff;
`;
const PageRadios = styled.fieldset`
  flex: none;
  width: 63px;
  height: 73px;
  margin: 0;
  padding: 0 0 0 8px;
  border: 0;
  display: flex;
  flex-direction: column;
`;
const RadioLabel = styled.label`
  flex: 1;
  display: flex;
  align-items: center;
  gap: 5px;
`;
const Radio = styled.input`
  appearance: none;
  width: 6px;
  height: 6px;
  border-radius: 50%;
  border: 1px solid;
  border-color: #6a6a6a #fff #fff #6a6a6a;
  background: #fff;
  &:checked { background: radial-gradient(#111 0 1px, #fff 2px); }
`;
const columns = [
  ["nodes", "node edit", "temp nodes", "distance", "points"],
  ["lines", "line edit", "length"],
  ["surfaces", "surface edit", "defeature", "midsurface", "dimensioning"],
  ["solids", "solid edit", "ribs"],
  ["quick edit", "edge edit", "point edit", "autocleanup"],
];
const pages = ["Geom", "1D", "2D", "3D", "Analysis", "Tool", "Post"];

/* ---------- status bar ---------- */

const StatusBar = styled.footer`
  display: flex;
  align-items: center;
  height: 10px;
  padding: 0 1px 0 2px;
`;
const StatusText = styled.span`
  flex: 1;
`;
const StatusField = styled.span`
  display: flex;
  align-items: center;
  gap: 2px;
  width: ${(p) => p.$width}px;
  height: 10px;
  padding-left: ${(p) => (p.$swatch ? 3 : 1)}px;
  border: 1px solid;
  border-color: #6f6f6f #fff #fff #6f6f6f;
`;
const Swatch = styled.i`
  width: 4px;
  height: 4px;
  border: 1px solid #55480c;
  background: ${(p) => p.$color};
`;

/* ---------- taskbar ---------- */

const Taskbar = styled.nav`
  display: flex;
  align-items: stretch;
  height: 21px;
  background: #07103a;
  color: #fff;
  font-family: ${SHELL};
`;
const TaskList = styled.div`
  display: flex;
  width: 459px;
`;
const TaskButton = styled.button`
  flex: 1;
  display: grid;
  place-items: center;
  background: ${(p) => p.$tint || "transparent"};
  ${(p) => p.$running && css`
    background: linear-gradient(${p.$line || "#8d93c8"}, ${p.$line || "#8d93c8"}) bottom / 21px 1px no-repeat ${p.$tint || "transparent"};
  `}
`;
const Tray = styled.div`
  margin-left: auto;
  display: flex;
  width: 363px;
`;
const TrayButton = styled.button`
  flex: 1;
  display: grid;
  place-items: center;
`;
const Clock = styled.time`
  width: 36px;
  display: flex;
  flex-direction: column;
  justify-content: center;
  text-align: center;
`;
const NoticeButton = styled.button`
  width: 14px;
  display: grid;
  place-items: center;
`;
const ShowDesktop = styled.button`
  width: 3px;
  margin-left: 8px;
  border-left: 1px solid #4b5378;
`;

const taskIcons = [
  ["Start", <path d="M2 3.500l4.500-.7v4H2zM7 2.700l5.500-.8v4.900H7zM2 7.400h4.500v4L2 10.700zM7 7.400h5.500v4.900L7 11.500z" fill="#fff" />],
  ["Search", <g fill="none" stroke="#fff" strokeWidth="1.200"><circle cx="8.500" cy="5.500" r="3.500" /><path d="M6 8l-4 4.500" /></g>],
  ["Task view", <g fill="none" stroke="#d5d8e6" strokeWidth="1"><path d="M3.500 3.500h7v7h-7zM1.500 4v6M12.500 4v6" /></g>],
  ["Archiver", <g><path d="M1 2h12v3H1z" fill="#b5283a" /><path d="M1 5h12v4H1z" fill="#3a56b8" /><path d="M1 9h12v3H1z" fill="#3a9a3c" /><path d="M6 2h2.500v10H6z" fill="#d9a53a" /></g>],
  ["Files", <g><path d="M1 2h5l1 1.500h6V12H1z" fill="#f8d775" /><path d="M3 8h8v4H3z" fill="#4aa6e0" /><path d="M5 10h4v2H5z" fill="#f8d775" /></g>],
  ["Notes", <g><path d="M3 1h10l-2 8H1z" fill="#d9dbe0" /><path d="M2 7l5-2 4 5-5 3z" fill="#8f96a5" /><path d="M4 3h6" stroke="#777" /></g>, 1],
  ["Chromium", <g><circle cx="7" cy="7" r="6.300" fill="#5a94ee" /><path d="M7 7L1 4a6.300 6.300 0 0 1 12 0z" fill="#3f74d8" /><circle cx="7" cy="7" r="2.800" fill="#fff" /><circle cx="7" cy="7" r="2.100" fill="#3a6fd0" /></g>, 1],
  ["Media player", <g><path d="M1 2h11v10H1z" fill="#9cc6e4" /><circle cx="7" cy="7" r="4" fill="#f08a2a" /><path d="M6 5l3.500 2L6 9z" fill="#fff" /></g>],
  ["Compass", <g><circle cx="7" cy="7" r="6.300" fill="#d9d4c8" stroke="#8a8478" /><path d="M4 3l4 4-1 1z" fill="#a8322a" /><path d="M10 11L6 7l1-1z" fill="#5c5c5c" /></g>],
  ["Chat", <g><path d="M2 2h8c2 3 2 5 2 8H1c0-3 0-5 1-8z" fill="#8c9adf" /><circle cx="5" cy="6" r="1" fill="#fff" /><circle cx="8" cy="6" r="1" fill="#fff" /><circle cx="11" cy="10.500" r="3.300" fill="#e8493c" /><circle cx="11" cy="10.500" r="1" fill="#fff" /></g>, 1, "#8f4a34", "#e07a30"],
  ["Steam", <g><circle cx="7" cy="7" r="6" fill="#14345e" /><circle cx="9" cy="5" r="2.300" fill="none" stroke="#e6ecf4" strokeWidth="1.200" /><path d="M1 8l4 2 3-3" stroke="#e6ecf4" strokeWidth="1.600" fill="none" /></g>, 1],
  ["Word", <g><path d="M6 2h7v10H6z" fill="#fff" stroke="#2b579a" strokeWidth=".7" /><path d="M1 2l7-1.500v13L1 12z" fill="#2b579a" /><text x="4.500" y="9.500" fontSize="6" fontWeight="700" textAnchor="middle" fill="#fff">W</text></g>, 1],
  ["Excel", <g><path d="M6 2h7v10H6z" fill="#fff" stroke="#1e7145" strokeWidth=".7" /><path d="M1 2l7-1.500v13L1 12z" fill="#1e7145" /><text x="4.500" y="9.500" fontSize="6" fontWeight="700" textAnchor="middle" fill="#fff">X</text></g>, 1],
  ["HyperWorks", <g><path d="M2 4l3-1v8l-3 1z" fill="#35b85a" /><path d="M5 3l3-.5v8L5 11z" fill="#7ed63a" /><path d="M8 2.500L11.500 2v4L8 6.500z" fill="#e8c82a" /><path d="M8 6.500l3.500-.5v3.500l-3.500 1z" fill="#3a7ae8" /></g>, 1, "#0a1a6e"],
  ["Firefox", <g><circle cx="7" cy="7" r="6.300" fill="#f2872a" /><path d="M3 2c3-2 7-1 9 2 1 2-1 4-3 4 1-3-3-5-6-6z" fill="#f8c83a" /><circle cx="6.500" cy="6.500" r="3" fill="#3a6ad0" /></g>, 1],
  ["Forum", <g><circle cx="7" cy="7" r="6.300" fill="#2a7a9a" /><path d="M1 8c3-2 5 1 8-1l4 1c-1 6-11 6-12 0z" fill="#9ad4e0" /><path d="M4 4h5" stroke="#0e3c50" strokeWidth="1.500" /></g>, 1],
  ["Disk", <g><path d="M2 3c4-3 9-2 11 2-1 5-4 8-7 8C3 12 1 7 2 3z" fill="#bcbec4" /><circle cx="7" cy="6.500" r="2" fill="#8b8e96" /></g>, 1],
  ["Atom", <g fill="none" stroke="#8a90d0" strokeWidth="1"><ellipse cx="7" cy="7" rx="6" ry="2.500" /><ellipse cx="7" cy="7" rx="6" ry="2.500" transform="rotate(60 7 7)" /><ellipse cx="7" cy="7" rx="6" ry="2.500" transform="rotate(120 7 7)" /><circle cx="7" cy="7" r="1.200" fill="#e05050" /></g>, 1],
];

const trayIcons = [
  <g><path d="M1 4l5-2 6 3v4H1z" fill="#d8dade" /><path d="M8 8l4 4M12 8l-4 4" stroke="#e03030" strokeWidth="2" /></g>,
  <g><path d="M1 2h12l-3 5H4z" fill="#3aa090" /><path d="M8 4h5v8z" fill="#dfe8e8" /></g>,
  <g><path d="M7 1l5 2v4c0 3-3 5-5 6-2-1-5-3-5-6V3z" fill="#fff" /><path d="M7 2v10M2 6h10" stroke="#223" /><path d="M10 8l3 5H7z" fill="#f2b51e" /></g>,
  <g fill="none" stroke="#dfe2ea"><path d="M1.500 1.500h11v11h-11z" /><circle cx="7" cy="7" r="2.800" /><circle cx="7" cy="7" r=".8" /></g>,
  <g><path d="M1 12V6h3l2 3 2-3h4v6" fill="none" stroke="#e8e8ee" strokeWidth="2" /><circle cx="11" cy="3.500" r="2" fill="#e03a30" /></g>,
  <g><path d="M1 1h12v12H1z" fill="#2d7a3a" /><path d="M3 3l2 6h6M5 5l4 3" stroke="#fff" strokeWidth="1.300" fill="none" /></g>,
  <g><circle cx="8.500" cy="5" r="4" fill="#6a8ae0" /><path d="M2 12l4-4" stroke="#b8c8f0" strokeWidth="2" /></g>,
  <g><circle cx="7" cy="7" r="5.500" fill="#b8bcc0" /><circle cx="6" cy="6" r="2" fill="#eee" /></g>,
  <g><path d="M1 4h10v5H1z" fill="#5a6a8e" /><path d="M3 7h10v4H3z" fill="#8a7ab8" /></g>,
  <g><path d="M1 1h12v12H1z" fill="#e8eaee" /><path d="M4 3v6h4V6" stroke="#333" fill="none" strokeWidth="1.500" /><path d="M9 8h3v4H9z" fill="#555" /></g>,
  <g><path d="M1 4c4-4 9-3 12 1l-2 5H3z" fill="#dfe6e2" /><path d="M5 8l2 3 4-5" stroke="#3ab03a" fill="none" strokeWidth="2.200" /></g>,
  <g><path d="M7 2L2 11h3l3-6z" fill="#2aa0d8" /><path d="M7 2l5 9H9L6 6z" fill="#35b03a" /></g>,
  <path d="M2 10c-2-3 2-4 3-4 2-3 6-1 6 1 3 0 3 3 1 3z" fill="#9a9fae" />,
  <g><path d="M1 1h12v12H1z" fill="#e8502a" /><path d="M3 5h8M3 8h8" stroke="#fbd0a8" strokeWidth="1.500" strokeDasharray="2 1" /></g>,
  <g><circle cx="7" cy="7" r="6" fill="#d8ecf8" /><path d="M4 4l6 6" stroke="#2a80c8" strokeWidth="2.500" /></g>,
  <g><path d="M2 4c5 0 7 3 7 8M2 8c2 0 4 1 4 4M6 2l6 9" stroke="#e0e2ea" fill="none" strokeWidth="1.400" /><circle cx="10" cy="3" r="2" fill="#e04a30" /></g>,
  <g><path d="M2 1h10v12H2z" fill="#c8cace" /><path d="M4 4l6 6M10 4l-6 6" stroke="#445" strokeWidth="1.500" /></g>,
  <g><circle cx="7" cy="7" r="6" fill="#e02828" /><path d="M4 9V5.500L7 8l3-2.500V9" stroke="#fff" fill="none" strokeWidth="1.400" /></g>,
  <g><path d="M1 1h12v12H1z" fill="#e4e4e8" /><path d="M3 3v8M3 7l7 4M5 7l6-5" stroke="#c82838" strokeWidth="2.200" /></g>,
  <g><path d="M2 1h10v6H2z" fill="#dfe8f0" /><path d="M2 7h10v5H2z" fill="#2a78c0" /></g>,
  <g><circle cx="7" cy="7" r="6" fill="#22406a" /><circle cx="9" cy="5" r="2" fill="#dfe8f4" /><path d="M2 9l4 1 3-4" stroke="#dfe8f4" strokeWidth="1.800" fill="none" /></g>,
  <g><path d="M1 2h12v10H1z" fill="#47413e" /><path d="M3 5h8M3 9h5" stroke="#c05a3a" strokeWidth="1.500" /></g>,
  <path d="M4 2l3 2 3-2 3 2-3 2 3 2-3 2-3-2-3 2-3-2 3-2-3-2zM4 11l3-1.500 3 1.500-3 2z" fill="#e6eef8" />,
  <g><path d="M1 1h12v9H1z" fill="#b9bdd0" /><path d="M4 11h6v2H4z" fill="#dfe0e8" /></g>,
  <path d="M4 4h6v9H4zM5 1h4v3H5zM9 8h3v4" fill="none" stroke="#e4e6ee" strokeWidth="1.100" />,
  <g><path d="M1 1h12v12H1z" fill="#c01c24" /><path d="M3.500 10V4L7 8l3.500-4v6" stroke="#fff" fill="none" strokeWidth="1.500" /></g>,
  <path d="M1 4h3v3H1zM5 5h8v6H5z" fill="#dfe2ea" stroke="#fff" strokeWidth=".6" />,
  <g fill="none" stroke="#9aa0b8" strokeWidth="1.200"><path d="M2 12C3 6 7 2 12 2M5 12c1-4 3-6 7-7M8 12c1-2 2-3 4-4" /></g>,
  <g fill="none" stroke="#e4e6ee" strokeWidth="1.100"><path d="M1 5h2.500L7 2v10L3.500 9H1z" /><path d="M9 5c1 1 1 3 0 4M11 3.500c2 2 2 5 0 7" /></g>,
];

const menus = ["File", "Edit", "View", "Collectors", "Geometry", "Mesh", "Connectors", "Materials", "Properties", "BCs", "Setup", "Tools", "Morphing", "Post", "XYPlots", "Preferences", "Applications", "Help"];

export default function App() {
  return (
    <Page>
      <GlobalStyle />
      <TitleBar>
        <Svg $size={8} viewBox="0 0 14 14" aria-hidden="true">
          <path d="M7 2L2 11" stroke="#e04838" strokeWidth="1.800" />
          <path d="M7 2l5 9" stroke="#e88a78" strokeWidth="1.500" />
          <path d="M1 11.500h12" stroke="#58a0d8" strokeWidth="1.800" />
        </Svg>
        <WindowTitle>Test 7.mvw - HyperWorks 2017.2 - RadiossBlock (Radioss2017 Format)</WindowTitle>
        <WindowButtons>
          <WindowButton aria-label="Minimize"><svg width="6" height="6" viewBox="0 0 6 6"><path d="M.5 3.500h5" stroke="#222" strokeWidth=".8" /></svg></WindowButton>
          <WindowButton aria-label="Restore"><svg width="6" height="6" viewBox="0 0 6 6"><path d="M.5 2h3.500v3.500H.5zM1.800 2V.6h3.600v3.600H4" fill="none" stroke="#222" strokeWidth=".8" /></svg></WindowButton>
          <WindowButton aria-label="Close"><svg width="6" height="6" viewBox="0 0 6 6"><path d="M.5.5l5 5M5.500.5l-5 5" stroke="#222" strokeWidth=".8" /></svg></WindowButton>
        </WindowButtons>
      </TitleBar>
      <MenuBar>{menus.map((m) => <MenuItem key={m}>{m}</MenuItem>)}</MenuBar>

      <ToolStrip $gap={4} $height={19} $inset={2}>
        <Tools width={42} items={["undo", "f", "redo", "f"]} />
        <Tools width={162} items={["newModel", "v", "openModel", "v", "save", "v", "importG", "v", "exportR", "v", "exportP", "v", " ", "user", "book", "v"]} />
        <Tools width={95} items={["pagePlus", "pageDel", "win", "v", "winA", "winB", "pageEdit"]} />
        <Tools width={77} items={["cut", "copy", "v", "paste", "f", "pasteB", "f"]} />
        <Tools width={168} items={["zoomFit", "back", "ax1", "ax2", "ax3", "ax4", "ax5", "ax6", "iso", "scene", "sceneB", "f"]} />
        <Tools width={105} items={["zoomWin", "zoomCirc", "pan", "hand", "lr", "ud", "rot"]} />
        <Tools width={105} items={["cam1", "cam2", "cam3", "cam4", "cam5", "vid1", "vid2"]} />
        <PagerBox>
          <ToolButton aria-label="Previous page"><Icon name="prev" /></ToolButton>
          <ToolButton aria-label="Next page"><Icon name="next" /></ToolButton>
          <PagerInput aria-label="Page" defaultValue="1" />
          <span>of 1</span>
        </PagerBox>
      </ToolStrip>

      <Main>
        <SidePanel>
          <TabList role="tablist">
            {["Session", "Mask", "Model", "Utility", "Export"].map((t) => <Tab key={t} role="tab">{t}</Tab>)}
            <Tab role="tab" $active aria-selected="true">
              Model Checker
              <svg width="5" height="5" viewBox="0 0 5 5"><path d="M.7.7l3.600 3.600M4.300.7L.7 4.300" stroke="#444" strokeWidth=".9" /></svg>
            </Tab>
            <Tab role="tab">ADMAS Manager</Tab>
          </TabList>
          <PanelBody>
            <PanelTools>
              <ToolButton $on aria-label="Checks"><Icon name="check1" /></ToolButton>
              <ToolButton aria-label="Run list"><Icon name="check2" /></ToolButton>
            </PanelTools>
            <PathRow>
              <PathLabel htmlFor="config">Configuration file:</PathLabel>
              <PathField>
                <PathInput id="config" defaultValue="C:/Program Files/Altair/2017/hm/scripts/ModelCheck/Radioss/modelchecker" />
                <button aria-label="Browse"><Icon name="openFile" size={9} /></button>
              </PathField>
            </PathRow>
            <ActionRow>
              <ToolButton aria-label="Auto correct"><Icon name="wrench" /></ToolButton>
              <ToolButton aria-label="Run"><Icon name="run" /></ToolButton>
            </ActionRow>
            <Browser>
              <EntityTree />
              <VScroll>
                <ScrollButton aria-label="Scroll up"><Arrow /></ScrollButton>
                <Space $grow={127} />
                <Thumb $grow={81} />
                <Space $grow={197} />
                <ScrollButton aria-label="Scroll down"><Arrow turn={180} /></ScrollButton>
              </VScroll>
            </Browser>
            <HScroll>
              <ScrollButton aria-label="Scroll left"><Arrow turn={270} /></ScrollButton>
              <Thumb $row $grow={255} />
              <Space $grow={48} />
              <ScrollButton aria-label="Scroll right"><Arrow turn={90} /></ScrollButton>
            </HScroll>
          </PanelBody>
        </SidePanel>

        <WorkArea>
          <ViewRow>
            <SideTools>
              <Grip $flat />
              {["s1", "s2", "s3", "s4", "s5", "s6", "s7", "s8", "s9", "s10", "s11", "s12", "s13"].map((n) => (
                <ToolButton key={n} aria-label={n} $on={["s9", "s10", "s11", "s13"].includes(n)}><Icon name={n} /></ToolButton>
              ))}
            </SideTools>
            <Viewport>
              <Scene />
              <ModelInfo>Model Info: C:/Users/AJPWerk/Documents/Test 7.hm*</ModelInfo>
            </Viewport>
          </ViewRow>

          <ToolStrip $gap={3} $height={17} $inset={2}>
            <Tools width={161} items={["comp", "part", "mat", "prop", "load", "sys", "v", "|", "del", "cards", "organize", "renumber"]} />
            <Tools
              width={297}
              items={[
                <Combo width={52} icon="shade" label="Shading" value="Auto" />,
                "wireSurf", "v", "solidSurf", "v", "cube", "|",
                <Combo width={55} icon="cubeColor" label="Color mode" value="By Comp" />,
                "cubeWire", "v", "cubeMesh", "v", "line", "v", "flat", "v", "diamond", "v", "split", "monitor",
              ]}
            />
            <Tools width={18} items={["star"]} />
            <Tools width={24} items={["meshSurf", "v"]} />
          </ToolStrip>

          <CommandPanel>
            <CommandGrid>
              {columns.map((col) => (
                <CommandColumn key={col[0]}>
                  {col.map((c, i) => <Command key={c} $row={i + 1}>{c}</Command>)}
                </CommandColumn>
              ))}
            </CommandGrid>
            <PageRadios aria-label="Page">
              {pages.map((p) => (
                <RadioLabel key={p}><Radio type="radio" name="page" defaultChecked={p === "Geom"} />{p}</RadioLabel>
              ))}
            </PageRadios>
          </CommandPanel>
        </WorkArea>
      </Main>

      <StatusBar>
        <StatusText>Model check completed. Keywords with blank fields are ignored.</StatusText>
        <StatusField $width={50} />
        <StatusField $width={50}>Model</StatusField>
        <StatusField $width={57} $swatch><Swatch $color="#ffe818" />Round</StatusField>
        <StatusField $width={57} $swatch><Swatch $color="#f59a14" />Ground</StatusField>
      </StatusBar>

      <Taskbar>
        <TaskList>
          {taskIcons.map(([label, art, running, tint, line]) => (
            <TaskButton key={label} aria-label={label} $running={running} $tint={tint} $line={line}>
              <Svg $size={12} viewBox="0 0 14 14">{art}</Svg>
            </TaskButton>
          ))}
        </TaskList>
        <Tray>
          {trayIcons.map((art, i) => (
            <TrayButton key={i} aria-label={`Tray item ${i + 1}`}><Svg $size={9} viewBox="0 0 14 14">{art}</Svg></TrayButton>
          ))}
        </Tray>
        <Clock><span>04:46</span><span>9-2-2018</span></Clock>
        <NoticeButton aria-label="Notifications">
          <Svg $size={10} viewBox="0 0 14 14"><path d="M1.500 2h11v8h-3v3l-3-3h-5z" fill="none" stroke="#e4e6ee" strokeWidth="1.100" /></Svg>
        </NoticeButton>
        <ShowDesktop aria-label="Show desktop" />
      </Taskbar>
    </Page>
  );
}
